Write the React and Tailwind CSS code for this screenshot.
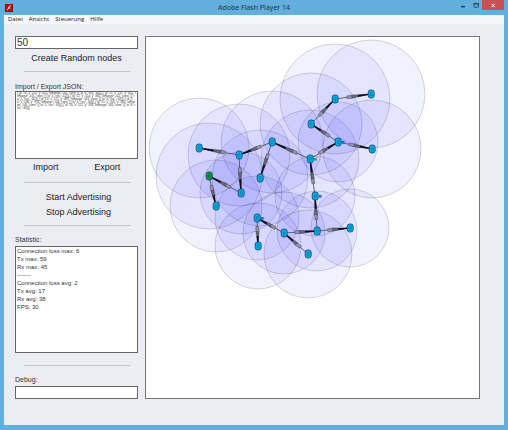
import React from "react";

const NODES = [
  { x: 53, y: 111, r: 50 },
  { x: 93, y: 118, r: 51 },
  { x: 63, y: 139, r: 53, root: true },
  { x: 95, y: 156, r: 41 },
  { x: 70, y: 169, r: 46 },
  { x: 114, y: 141, r: 48 },
  { x: 126, y: 105, r: 51 },
  { x: 111, y: 181, r: 42, led: "#1463ff" },
  { x: 112, y: 209, r: 43 },
  { x: 138, y: 196, r: 41 },
  { x: 162, y: 217, r: 44 },
  { x: 171, y: 194, r: 40 },
  { x: 204, y: 191, r: 39 },
  { x: 169, y: 159, r: 40, led: "#1463ff" },
  { x: 164, y: 122, r: 49, led: "#19b23c" },
  { x: 192, y: 105, r: 40, led: "#1463ff" },
  { x: 226, y: 112, r: 49 },
  { x: 165, y: 87, r: 51 },
  { x: 189, y: 62, r: 55 },
  { x: 225, y: 57, r: 54 },
];

const LINKS = [
  [0, 1], [1, 6], [3, 1], [2, 3], [4, 2], [5, 6], [6, 14], [15, 14], [17, 15], [16, 15],
  [14, 13], [13, 11], [12, 11], [11, 9], [9, 10], [7, 9], [8, 7], [18, 17], [19, 18],
];

const JSON_TEXT = Array.from(
  { length: 7 },
  (_, i) => `{"id":${i + 10},"x":${120 + i * 17},"y":${410 - i * 9},"txRange":${140 + i},"conn":[{"to":${i},"rssi":-${60 + i}}]}`
).join(",");

const STATS = [
  "Connection loss max: 6",
  "Tx max: 59",
  "Rx max: 45",
  "-------",
  "Connection loss avg: 2",
  "Tx avg: 17",
  "Rx avg: 38",
  "FPS: 30",
].join("\n");

function Link({ from, to }) {
  const dx = to.x - from.x;
  const dy = to.y - from.y;
  const len = Math.hypot(dx, dy);
  const angle = (Math.atan2(dy, dx) * 180) / Math.PI;
  const box = len * 0.6;
  return (
    <g transform={`translate(${from.x} ${from.y}) rotate(${angle})`}>
      <line x1="0" y1="0" x2={len} y2="0" stroke="#222230" strokeWidth="0.6" />
      <path d={`M0 0L${box - 2} -1.6V1.6Z`} fill="#66667a" stroke="#222230" strokeWidth="0.4" />
      <path d={`M0 -0.5L${box * 0.6} -0.9V0.9L0 0.5Z`} fill="#0c0c14" />
      <rect x={box - 2.5} y="-1.4" width="5" height="2.8" fill="#9494ae" stroke="#444455" strokeWidth="0.5" />
    </g>
  );
}

function Node({ node }) {
  return (
    <g>
      <rect x={node.x - 2.8} y={node.y - 4} width="6" height="8" rx="2.4" fill={node.root ? "#08a336" : "#00b8f5"} stroke="#123c58" strokeWidth="0.8" />
      <path d={`M${node.x - 0.8} ${node.y - 1.8}h2v3.8h-2zM${node.x - 0.8} ${node.y}h2`} fill="none" stroke="#064a70" strokeWidth="0.4" />
      {node.led && <rect x={node.x + 4} y={node.y - 1} width="2.6" height="2.6" fill={node.led} />}
    </g>
  );
}

function Divider() {
  return <hr className="ml-[9px] mr-2 h-px shrink-0 border-0 bg-[#c3c4ca]" />;
}

const label = "block h-[9px] text-[7px] leading-[9px] text-[#333]";
const box = "block w-full resize-none border border-[#666] bg-white px-px text-[#333] outline-none";
const button = "text-[9px] leading-[15px] text-[#222]";

export default function App() {
  return (
    <div className="flex min-h-screen flex-col border-x-4 border-b-[5px] border-[#62aedc] bg-[#ecedf3] font-['Liberation_Sans',Arial,sans-serif]">
      <header className="relative flex h-[15px] items-center justify-center bg-[#62aedc]">
        <svg className="absolute left-px top-1 size-2" viewBox="0 0 8 8" aria-hidden="true">
          <rect width="8" height="8" rx="0.5" fill="#c1090c" />
          <rect x="0.4" y="0.4" width="7.2" height="7.2" fill="none" stroke="#7c0909" strokeWidth="0.6" />
          <path d="M5.8 1.7C4.5 1.8 4.1 2.6 3.7 3.8S2.9 5.8 2.1 6.1M3.6 4h1.7" fill="none" stroke="#fff" strokeWidth="1" />
        </svg>
        <h1 className="font-['Noto_Sans',sans-serif] text-[7px] leading-[15px] text-[#1c3a4c]">Adobe Flash Player 14</h1>
        <div className="absolute right-0 top-0 flex h-[10px]">
          <button aria-label="Minimize" className="flex w-[13px] items-center justify-center">
            <svg className="size-[10px]" viewBox="0 0 10 10"><path d="M3 6.6h4" stroke="#1f4558" strokeWidth="1.5" /></svg>
          </button>
          <button aria-label="Maximize" className="flex w-[13px] items-center justify-center">
            <svg className="size-[10px]" viewBox="0 0 10 10"><path d="M3 3.5h4.4v3.7H3z" fill="none" stroke="#1f4558" strokeWidth="0.8" /><path d="M2.6 3.8h5.2" stroke="#1f4558" strokeWidth="1.3" /></svg>
          </button>
          <button aria-label="Close" className="flex w-[22px] items-center justify-center bg-[#c75050]">
            <svg className="size-[10px]" viewBox="0 0 10 10"><path d="M3.6 3.8l3.2 3.4M6.8 3.8L3.6 7.2" stroke="#fff" strokeWidth="1" /></svg>
          </button>
        </div>
      </header>
      <nav className="flex h-[9px] items-center gap-[6px] bg-[#f5f6f7] px-1 font-['Open_Sans',sans-serif] text-[6px] leading-[9px] text-[#222]">
        <button>Datei</button>
        <button>Ansicht</button>
        <button>Steuerung</button>
        <button>Hilfe</button>
      </nav>
      <main className="flex gap-[7px] pb-6 pl-[11px] pr-6 pt-3">
        <section className="flex w-[123px] shrink-0 flex-col">
          <input aria-label="Number of nodes" defaultValue="50" className={`${box} h-[13px] text-[10px] leading-[11px]`} />
          <button className={`${button} mb-1 h-[18px]`}>Create Random nodes</button>
          <Divider />
          <label htmlFor="json" className={`${label} mt-[10px]`}>Import / Export JSON:</label>
          <textarea id="json" defaultValue={JSON_TEXT} spellCheck={false} className={`${box} h-[68px] overflow-hidden break-all text-[3px] leading-[3px]`} />
          <div className="mb-[7px] grid h-4 grid-cols-2">
            <button className={button}>Import</button>
            <button className={button}>Export</button>
          </div>
          <Divider />
          <div className="mb-[5px] mt-[7px] flex flex-col pl-1">
            <button className={button}>Start Advertising</button>
            <button className={button}>Stop Advertising</button>
          </div>
          <Divider />
          <label htmlFor="stats" className={`${label} mb-[2px] mt-[9px]`}>Statistic:</label>
          <textarea id="stats" readOnly value={STATS} className={`${box} mb-3 h-[107px] overflow-hidden text-[6px] leading-[8px]`} />
          <Divider />
          <label htmlFor="debug" className={`${label} mb-[2px] mt-[9px]`}>Debug:</label>
          <input id="debug" className={`${box} h-[13px] text-[6px]`} />
        </section>
        <section className="min-w-0 flex-1 border border-[#777] bg-white">
          <svg className="block h-full w-full" role="img" aria-label="Node network">
            {NODES.map((n, i) => (
              <circle key={i} cx={n.x} cy={n.y} r={n.r} fill="#0000ff" fillOpacity="0.05" stroke="#000" strokeOpacity="0.22" strokeWidth="0.7" />
            ))}
            {LINKS.map(([a, b], i) => (
              <Link key={i} from={NODES[a]} to={NODES[b]} />
            ))}
            {NODES.map((n, i) => (
              <Node key={i} node={n} />
            ))}
          </svg>
        </section>
      </main>
    </div>
  );
}
